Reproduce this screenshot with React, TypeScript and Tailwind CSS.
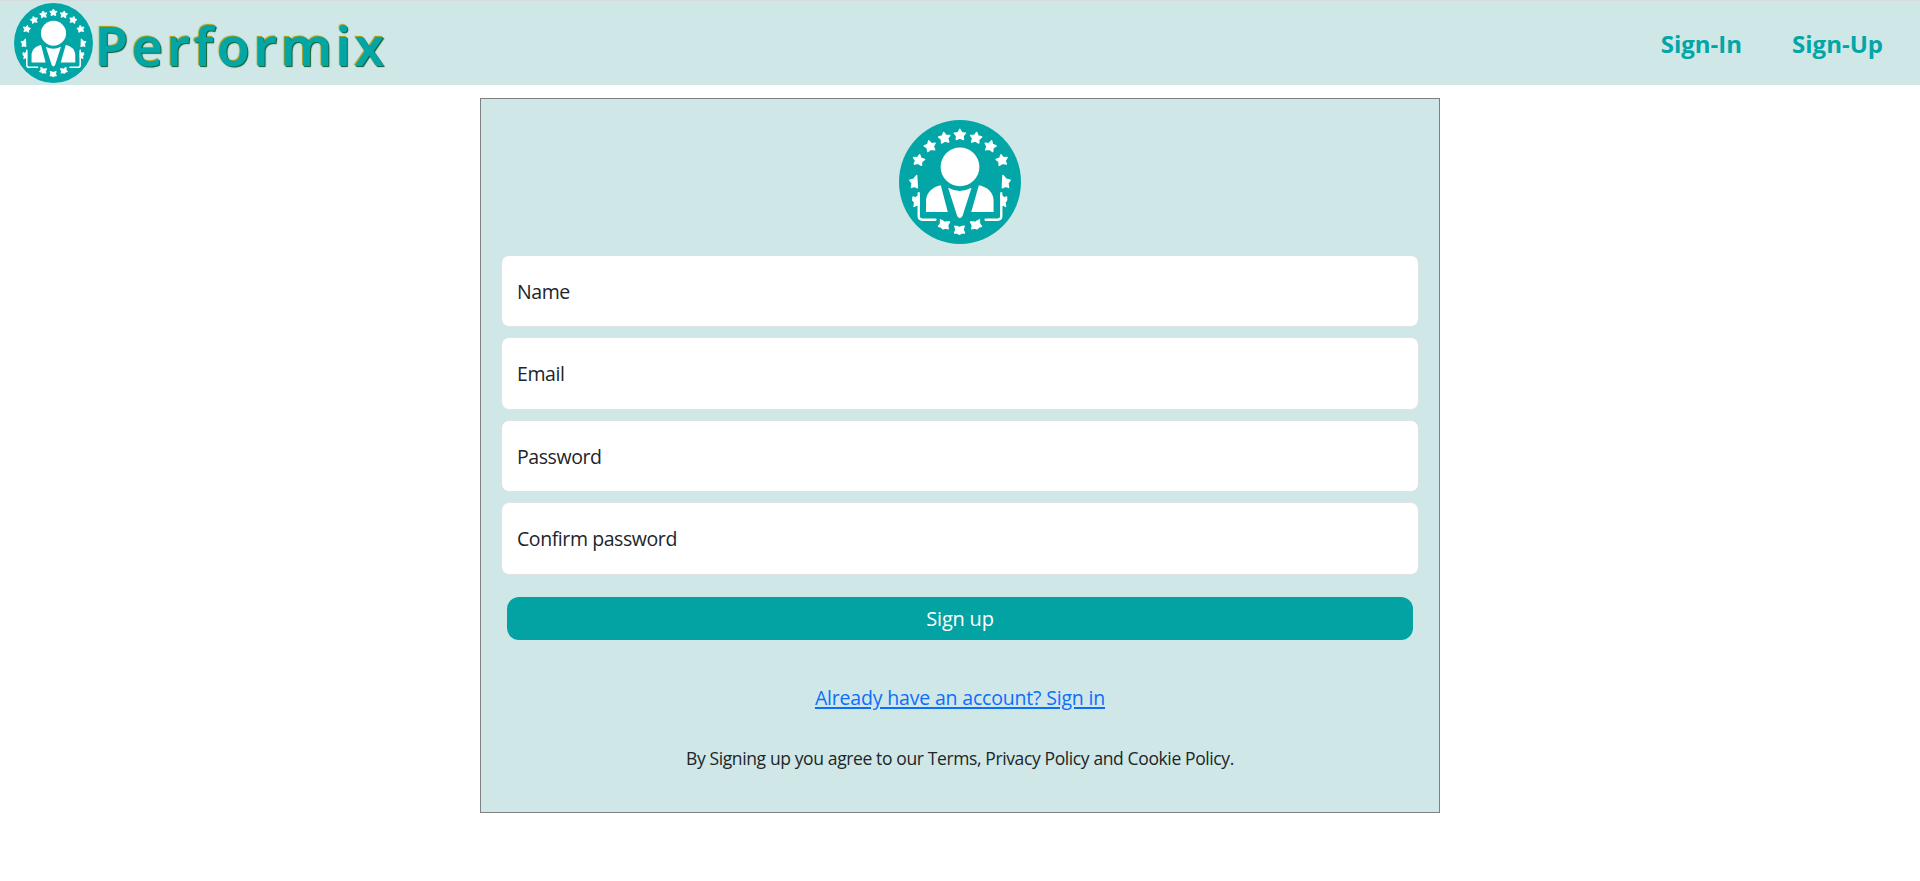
const STARS: [number, number, number][] = [
  [210, 74, 0],
  [164, 83, -8],
  [121, 108, -14],
  [87, 150, 10],
  [258, 83, 8],
  [301, 108, 14],
  [336, 150, -10],
];

const LOWER_STARS: [number, number, number][] = [
  [163, 343, 14],
  [209, 359, 0],
  [258, 343, -14],
];

const STAR_POINTS =
  "0,-17 5.5,-7 17,-5.5 9.5,3 11,14 0,9.5 -11,14 -9.5,3 -17,-5.5 -5.5,-7";

const LOWER_STAR_POINTS =
  "-14,-11 -6,-9 0,-6 6,-9 14,-11 11,0 15,10 7,10 0,14 -7,10 -15,10 -11,0";

function Logo({ className }: { className: string }) {
  return (
    <svg
      viewBox="28 29 365 373"
      preserveAspectRatio="none"
      className={className}
      role="img"
      aria-label="Performix"
    >
      <ellipse cx="210.5" cy="215.5" rx="182.5" ry="186.5" fill="#03a6a7" />
      <g fill="#fff" stroke="#fff" strokeWidth="4" strokeLinejoin="round">
        {STARS.map(([x, y, angle]) => (
          <polygon
            key={`${x}-${y}`}
            points={STAR_POINTS}
            transform={`translate(${x} ${y}) rotate(${angle})`}
          />
        ))}
        {LOWER_STARS.map(([x, y, angle]) => (
          <polygon
            key={`${x}-${y}`}
            points={LOWER_STAR_POINTS}
            transform={`translate(${x} ${y}) rotate(${angle})`}
          />
        ))}
        <path d="M81 196 L83 233 L74 229 L65 232 L67 219 L60 210 L72 207 Z" />
        <path d="M339 196 L337 233 L347 229 L356 232 L354 219 L361 210 L349 207 Z" />
        <path d="M70 260 L78 263 L87 256 V286 L80 285 L73 289 L75 277 L69 270 Z" />
        <path d="M350 260 L342 263 L334 256 V286 L341 285 L347 289 L345 277 L350 270 Z" />
      </g>
      <g fill="none" stroke="#fff" strokeWidth="7" strokeLinecap="round" strokeLinejoin="round">
        <path d="M87 249 V320 Q88 329 98 329 H137" />
        <path d="M334 249 V320 Q333 329 323 329 H287" />
      </g>
      <g fill="#fff">
        <circle cx="210.5" cy="170" r="58" />
        <path d="M153 225 L174 306 H109 V269 C111 246 130 229 153 225 Z" />
        <path d="M267 225 L244 306 H311 V269 C309 246 292 230 267 225 Z" />
        <path d="M175 233 Q210 252 245 233 L218 318 Q210 331 202 318 Z" />
      </g>
    </svg>
  );
}

const FIELDS = [
  { label: "Name", box: "h-[72px] mb-[10px] pt-[2px]" },
  { label: "Email", box: "h-[73px] mb-[10px]" },
  { label: "Password", box: "h-[72px] mb-[10px] pt-[2px]" },
  { label: "Confirm password", box: "h-[73px] mb-[22px]" },
];

export default function App() {
  return (
    <div className="min-h-screen bg-white font-['Open_Sans',sans-serif] text-[#212529]">
      <header className="flex h-[85px] items-start justify-between border-t border-[#d9dcdf] bg-[#cfe7e7] pr-[37px] pl-[14px]">
        <a href="#" className="flex items-start gap-[2px] pt-[1.5px]">
          <Logo className="h-[80px] w-[79px]" />
          <span className="pt-[15.5px] font-['Noto_Sans',sans-serif] text-[54px] leading-none font-semibold tracking-[3.4px] text-[#03a6a7] [text-shadow:1px_1px_1px_#0a5a2c,-1px_-1px_1px_#a09a10]">
            Performix
          </span>
        </a>
        <nav className="flex gap-[50px] pt-[27px] text-2xl font-bold text-[#03a6a7]">
          <a href="#">Sign-In</a>
          <a href="#">Sign-Up</a>
        </nav>
      </header>
      <main className="mx-auto mt-[13px] flex h-[715px] w-[960px] flex-col border border-[#808080] bg-[#cfe7e7] px-[20px] pt-[21px]">
        <Logo className="mb-[11px] h-[124px] w-[122px] shrink-0 self-center" />
        {FIELDS.map(({ label, box }) => (
          <label
            key={label}
            className={`flex shrink-0 items-center rounded-lg border border-[#dee2e6] bg-white px-[15px] text-[19.5px] tracking-[-0.42px] ${box}`}
          >
            {label}
          </label>
        ))}
        <button className="mx-[6px] h-[43px] shrink-0 rounded-xl bg-[#03a2a3] text-xl tracking-[-0.2px] text-white">
          Sign up
        </button>
        <a
          href="#"
          className="mt-[43px] self-center text-[19.5px] leading-[30px] tracking-[-0.18px] text-[#0d6efd] underline decoration-2 underline-offset-2"
        >
          Already have an account? Sign in
        </a>
        <p className="mt-[32px] text-center text-[17.5px] leading-[27px] tracking-[-0.38px]">
          By Signing up you agree to our Terms, Privacy Policy and Cookie Policy.
        </p>
      </main>
    </div>
  );
}
